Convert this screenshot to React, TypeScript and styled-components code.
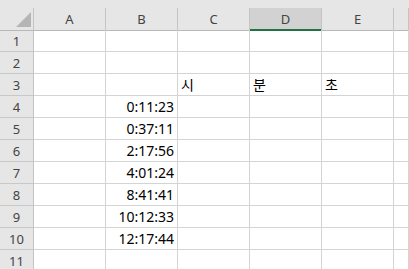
import React from 'react'
import styled, { createGlobalStyle } from 'styled-components'

const GlobalStyle = createGlobalStyle`
  html, body {
    margin: 0;
    padding: 0;
    background: #ffffff;
    overflow: hidden;
  }
`

const Sheet = styled.div`
  width: 409px;
  height: 269px;
  overflow: hidden;
  background: #e6e6e6;
  font-family: "Noto Sans", "Noto Sans CJK KR", sans-serif;
`

const TopStrip = styled.div`
  height: 8px;
  background: #e6e6e6;
`

const Grid = styled.div`
  display: grid;
  grid-template-columns: 34px repeat(5, 72px) 1fr;
  grid-auto-rows: 22px;
  background: #ffffff;
`

const Corner = styled.div`
  position: relative;
  background: #e6e6e6;
  border-right: 1px solid #c4c4c4;
  border-bottom: 1px solid #b8b8b8;
  box-sizing: border-box;
  height: 23px;
`

const CornerTriangle = styled.div`
  position: absolute;
  right: 2px;
  bottom: 3px;
  width: 0;
  height: 0;
  border-left: 15px solid transparent;
  border-bottom: 15px solid #b5b5b5;
`

const ColHeader = styled.div<{ $selected?: boolean }>`
  display: flex;
  align-items: center;
  justify-content: center;
  height: 23px;
  box-sizing: border-box;
  background: ${p => (p.$selected ? '#d2d2d2' : '#e6e6e6')};
  border-right: 1px solid #c4c4c4;
  border-bottom: ${p => (p.$selected ? '2px solid #217346' : '1px solid #b8b8b8')};
  padding-top: ${p => (p.$selected ? '1px' : '0')};
  color: #444444;
  font-size: 13px;
`

const RowHeader = styled.div`
  display: flex;
  align-items: center;
  justify-content: center;
  box-sizing: border-box;
  background: #e6e6e6;
  border-right: 1px solid #c4c4c4;
  border-bottom: 1px solid #c8c8c8;
  color: #444444;
  font-size: 13px;
  padding-top: 1px;
`

const Cell = styled.div<{ $align?: 'left' | 'right' }>`
  display: flex;
  align-items: flex-end;
  justify-content: ${p => (p.$align === 'right' ? 'flex-end' : 'flex-start')};
  box-sizing: border-box;
  border-right: 1px solid #d4d4d4;
  border-bottom: 1px solid #d4d4d4;
  padding: 0 3px 1px 3px;
  color: #000000;
  font-size: 14px;
  line-height: 19px;
  white-space: nowrap;
  overflow: hidden;
`

const columns = ['A', 'B', 'C', 'D', 'E', '']

const times: Record<number, string> = {
  4: '0:11:23',
  5: '0:37:11',
  6: '2:17:56',
  7: '4:01:24',
  8: '8:41:41',
  9: '10:12:33',
  10: '12:17:44',
}

const labels: Record<number, string> = { 2: '시', 3: '분', 4: '초' }

export default function App() {
  const rows = Array.from({ length: 11 }, (_, i) => i + 1)

  return (
    <Sheet>
      <GlobalStyle />
      <TopStrip />
      <Grid>
        <Corner>
          <CornerTriangle />
        </Corner>
        {columns.map((c, i) => (
          <ColHeader key={i} $selected={c === 'D'}>
            {c}
          </ColHeader>
        ))}
        {rows.map(r => (
          <React.Fragment key={r}>
            <RowHeader>{r}</RowHeader>
            {columns.map((_, ci) => {
              if (ci === 1 && times[r]) {
                return (
                  <Cell key={ci} $align="right">
                    {times[r]}
                  </Cell>
                )
              }
              if (r === 3 && labels[ci]) {
                return <Cell key={ci}>{labels[ci]}</Cell>
              }
              return <Cell key={ci} />
            })}
          </React.Fragment>
        ))}
      </Grid>
    </Sheet>
  )
}
